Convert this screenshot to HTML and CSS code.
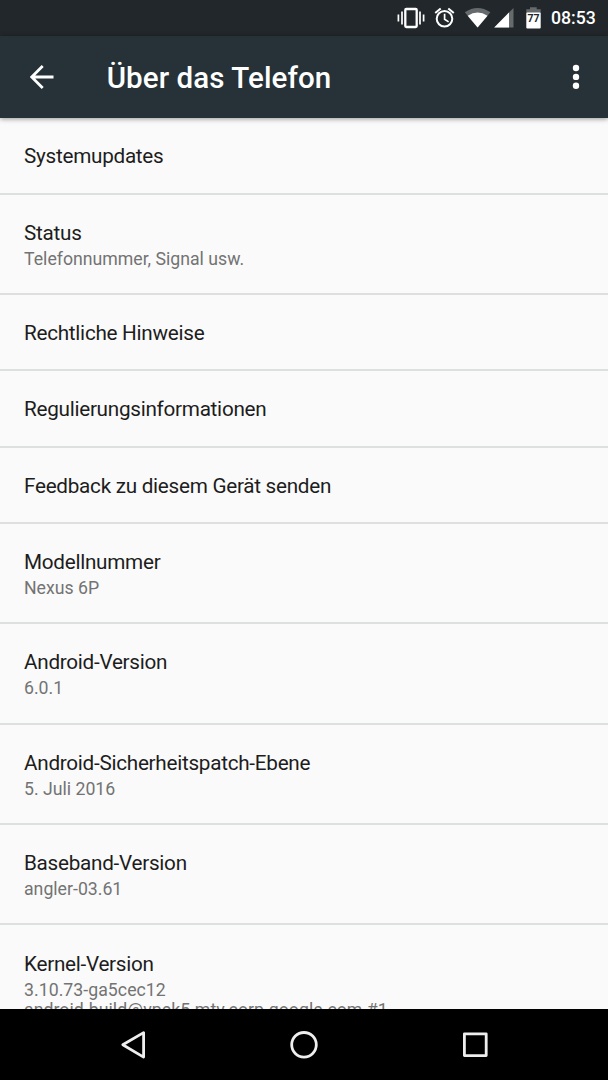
FILE: index.html
```html
<!DOCTYPE html>
<html lang="de">
<head>
<meta charset="utf-8">
<title>Über das Telefon</title>
<link rel="stylesheet" href="styles.css">
</head>
<body>
<div class="phone">
  <div class="status-bar">
    <svg class="status-icons" width="154" height="36" viewBox="388 0 154 36">
      <rect x="405.3" y="9" width="11.4" height="18" rx="1" fill="none" stroke="#fff" stroke-width="2.3"/>
      <path d="M402 11.5v13M398.4 14.5v7M420 11.5v13M423.6 14.5v7" stroke="#fff" stroke-width="1.7"/>
      <circle cx="444.5" cy="18.8" r="7.8" fill="none" stroke="#fff" stroke-width="2"/>
      <path d="M444.6 13.7v5.6l4 2.6" fill="none" stroke="#fff" stroke-width="1.7"/>
      <path d="M440.7 8.4l-5.5 4.6M448.3 8.4l5.5 4.6" stroke="#fff" stroke-width="2"/>
      <path d="M477.6 27.6L464.8 12.2Q477.6 3.6 490.4 12.2z" fill="#666a6c"/>
      <path d="M477.6 27.6L467.7 15.7Q477.6 9.2 487.5 15.7z" fill="#fff"/>
      <path d="M494.2 27.5L513.5 8v19.5z" fill="#666a6c"/>
      <path d="M494.2 27.5L509 12.6v14.9z" fill="#fff"/>
      <path d="M530 7.3h6.7v2h4V13h-14.4V9.3H530z" fill="#666a6c"/>
      <rect x="526.3" y="12.5" width="14.4" height="16" rx="1" fill="#fff"/>
      <text class="battery-level" x="533.5" y="21.8" text-anchor="middle">77</text>
    </svg>
    <span class="clock">08:53</span>
  </div>
  <header class="app-bar">
    <svg class="back" width="24" height="24" viewBox="0 0 24 24"><path d="M23.5 12H1.8M12.7 1L1.7 12l11 11" fill="none" stroke="#fff" stroke-width="2.8"/></svg>
    <h1 class="heading">Über das Telefon</h1>
    <svg class="more" width="8" height="26" viewBox="0 0 8 26" fill="#fff"><circle cx="4" cy="4" r="3.2"/><circle cx="4" cy="12.9" r="3.2"/><circle cx="4" cy="21.7" r="3.2"/></svg>
  </header>
  <main class="list">
    <div class="row single first"><div class="title">Systemupdates</div></div>
    <div class="row"><div class="title">Status</div><div class="summary">Telefonnummer, Signal usw.</div></div>
    <div class="row single"><div class="title">Rechtliche Hinweise</div></div>
    <div class="row single"><div class="title">Regulierungsinformationen</div></div>
    <div class="row single"><div class="title">Feedback zu diesem Gerät senden</div></div>
    <div class="row"><div class="title">Modellnummer</div><div class="summary">Nexus 6P</div></div>
    <div class="row"><div class="title">Android-Version</div><div class="summary">6.0.1</div></div>
    <div class="row"><div class="title">Android-Sicherheitspatch-Ebene</div><div class="summary">5. Juli 2016</div></div>
    <div class="row"><div class="title">Baseband-Version</div><div class="summary">angler-03.61</div></div>
    <div class="row last"><div class="title">Kernel-Version</div><div class="summary kernel">3.10.73-ga5cec12<br>android-build@vpek5.mtv.corp.google.com #1</div></div>
  </main>
  <nav class="nav-bar">
    <svg width="608" height="71" viewBox="0 1009 608 71" fill="none" stroke="#eee" stroke-width="2.8" stroke-linejoin="round">
      <path d="M122.8 1044.8L143.6 1032.6v24.5z"/>
      <circle cx="304" cy="1044.8" r="12.3"/>
      <rect x="464.4" y="1033.8" width="21.8" height="21.8"/>
    </svg>
  </nav>
</div>
</body>
</html>
```
FILE: styles.css
```css
body {
  margin: 0;
  font-family: Roboto, "Noto Sans", sans-serif;
}

.phone {
  display: flex;
  flex-direction: column;
  width: 608px;
  height: 1080px;
  overflow: hidden;
  background: #fafafa;
}

.status-bar {
  display: flex;
  flex: none;
  align-items: center;
  height: 36px;
  padding-left: 388px;
  background: #21272b;
}

.battery-level {
  font-size: 10.5px;
  font-weight: 700;
  fill: #21272b;
}

.clock {
  margin-left: 9px;
  font-size: 17.7px;
  font-weight: 500;
  line-height: 36px;
  color: #fff;
}

.app-bar {
  display: flex;
  flex: none;
  align-items: center;
  box-sizing: border-box;
  height: 82px;
  padding: 0 28.5px 0 29.7px;
  background: #263238;
  box-shadow: 0 1px 5px rgba(0, 0, 0, 0.4);
  z-index: 1;
}

.heading {
  flex: 1;
  margin: 2px 0 0 53px;
  font-size: 29.56px;
  font-weight: 500;
  line-height: 36px;
  letter-spacing: 0.07px;
  color: #fff;
}

.list {
  flex: 1;
  min-height: 0;
  overflow: hidden;
}

.row {
  box-sizing: border-box;
  height: 100.4px;
  padding: 26.2px 24px 0;
  border-bottom: 2px solid #dedfdf;
}

.single {
  height: 76.3px;
}

.first {
  height: 76.6px;
  padding-top: 25.8px;
}

.last {
  height: 130px;
}

.title {
  font-size: 20.7px;
  line-height: 25px;
  letter-spacing: -0.27px;
  color: #1d1d1d;
}

.summary {
  margin-top: 3px;
  font-size: 17.7px;
  line-height: 20.8px;
  color: #737373;
}

.kernel {
  letter-spacing: 0.04px;
}

.nav-bar {
  flex: none;
  height: 71px;
  background: #000;
}

.nav-bar svg {
  display: block;
}
```
